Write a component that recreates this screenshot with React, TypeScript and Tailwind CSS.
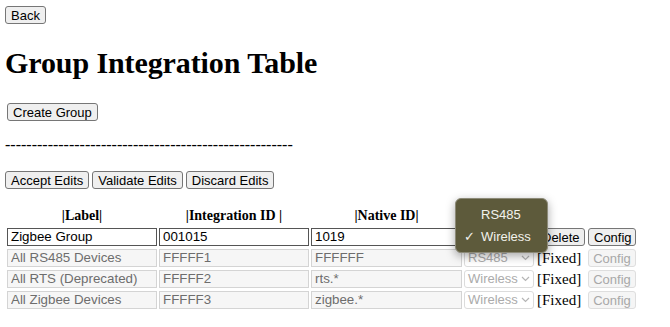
import React from 'react';

const sans = "font-['Liberation_Sans',Arial,sans-serif]";

const rows = [
  { label: 'All RS485 Devices', id: 'FFFFF1', native: 'FFFFFF', type: 'RS485' },
  { label: 'All RTS (Deprecated)', id: 'FFFFF2', native: 'rts.*', type: 'Wireless' },
  { label: 'All Zigbee Devices', id: 'FFFFF3', native: 'zigbee.*', type: 'Wireless' },
];

const Chevron = ({ className }: { className?: string }) => (
  <svg width="9" height="6" viewBox="0 0 9 6" className={className}>
    <path d="M1 1l3.5 3.5L8 1" fill="none" stroke="currentColor" strokeWidth="1.2" />
  </svg>
);

const btn = `${sans} text-[13px] leading-none h-[18px] px-[5px] bg-[#efefef] border border-[#767676] rounded-[3px] text-black`;
const cellInput = `${sans} text-[13.33px] h-[18px] px-[3px] outline-none`;

export default function App() {
  return (
    <div className="min-h-screen bg-white text-black font-['Liberation_Serif','Times_New_Roman',serif] pl-[5px] pt-[6px] flex flex-col items-start">
      <button className={`${btn} h-[16px] px-[5px]`}>Back</button>

      <h1 className="mt-[22px] text-[30px] font-bold leading-[34px] tracking-[-0.1px]">Group Integration Table</h1>

      <button className={`${btn} ml-[2px] mt-[23px]`}>Create Group</button>

      <div className="mt-[15px] text-[16px] leading-[18px]">
        ------------------------------------------------------
      </div>

      <div className="mt-[17px] flex gap-[3px]">
        <button className={btn}>Accept Edits</button>
        <button className={btn}>Validate Edits</button>
        <button className={btn}>Discard Edits</button>
      </div>

      <div className="mt-[16px] ml-[2px] grid grid-cols-[150px_150px_151px_70px_50px_48px] gap-x-[2px] gap-y-[3px]">
        <div className="h-[20px] flex items-center justify-center text-[14px] font-bold">|Label|</div>
        <div className="h-[20px] flex items-center justify-center text-[14px] font-bold">|Integration ID |</div>
        <div className="h-[20px] flex items-center justify-center text-[14px] font-bold">|Native ID|</div>
        <div />
        <div />
        <div />

        <input className={`${cellInput} w-[150px] border border-[#555]`} defaultValue="Zigbee Group" />
        <input className={`${cellInput} w-[150px] border border-[#555]`} defaultValue="001015" />
        <input className={`${cellInput} w-[151px] border border-[#555]`} defaultValue="1019" />
        <div className="relative">
          {/* closed select, hidden under its open menu */}
          <div className={`${sans} h-[18px] flex items-center justify-end px-[3px] border border-[#767676] rounded-[3px] text-[13px]`}>
            <Chevron className="text-[#333]" />
          </div>
          <div className="absolute left-[-9px] top-[-30px] z-10 w-[93px] h-[55px] rounded-[6px] bg-[#5d5a3b] border border-[#8c8a78] shadow-[0_3px_10px_rgba(0,0,0,0.35)] flex flex-col justify-center gap-[7px] text-[13px] font-medium text-[#f2f2ec]">
            <div className={`${sans} pl-[25px] leading-[15px]`}>RS485</div>
            <div className={`${sans} flex items-center leading-[15px]`}>
              <span className="w-[25px] pl-[8px]">✓</span>
              Wireless
            </div>
          </div>
        </div>
        <button className={`${btn} w-[49px] px-0`}>Delete</button>
        <button className={`${btn} w-[48px] px-0`}>Config</button>

        {rows.map((r) => (
          <React.Fragment key={r.id}>
            <input disabled className={`${cellInput} w-[150px] border border-[#d4d4d4] bg-[#f6f6f6] text-[#6d6d6d]`} defaultValue={r.label} />
            <input disabled className={`${cellInput} w-[150px] border border-[#d4d4d4] bg-[#f6f6f6] text-[#6d6d6d]`} defaultValue={r.id} />
            <input disabled className={`${cellInput} w-[151px] border border-[#d4d4d4] bg-[#f6f6f6] text-[#6d6d6d]`} defaultValue={r.native} />
            <div className={`${sans} h-[18px] flex items-center justify-between px-[3px] border border-[#dcdcdc] rounded-[3px] text-[13px] text-[#ababab]`}>
              {r.type}
              <Chevron className="text-[#b5b5b5]" />
            </div>
            <div className="h-[18px] flex items-center text-[15px] pl-[1px]">[Fixed]</div>
            <button disabled className={`${sans} text-[13px] leading-none h-[18px] w-[48px] bg-[#f5f5f5] border border-[#dedede] rounded-[3px] text-[#a8a8a8]`}>
              Config
            </button>
          </React.Fragment>
        ))}
      </div>
    </div>
  );
}
